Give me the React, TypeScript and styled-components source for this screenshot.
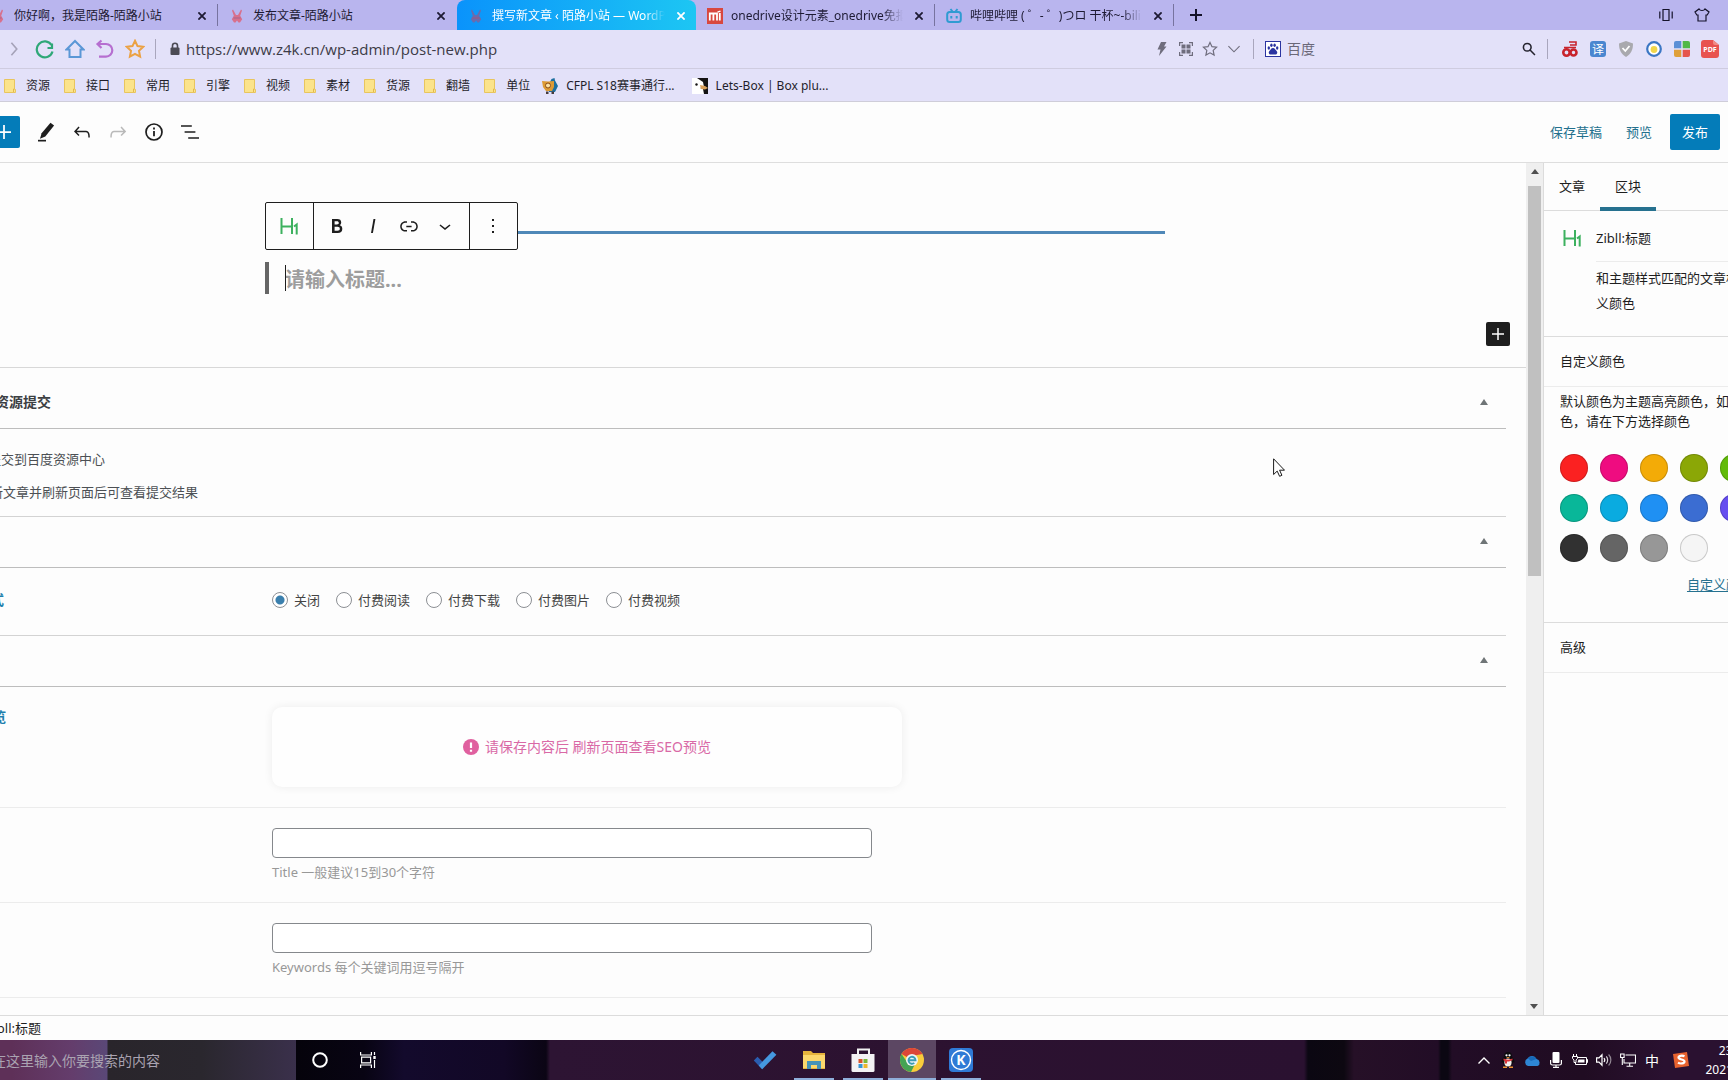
import React from "react";
import styled, { createGlobalStyle, css } from "styled-components";

const GlobalStyle = createGlobalStyle`
  *, *::before, *::after { box-sizing: border-box; }
  body {
    margin: 0;
    overflow: hidden;
    background: #fdfdfd;
    color: #1e1e1e;
    font-family: "Noto Sans", "Noto Sans CJK SC", sans-serif;
    font-size: 13px;
    line-height: 20px;
  }
  button, input { font: inherit; color: inherit; }
  button { margin: 0; padding: 0; border: 0; background: none; }
  h1, h2, h3, p { margin: 0; font-weight: 400; font-size: inherit; }
  svg { display: block; flex: none; }
`;

/* ---------- shell ---------- */

const Viewport = styled.div`
  height: 100vh;
  overflow: hidden;
`;

const Desktop = styled.div`
  display: flex;
  flex-direction: column;
  height: 100%;
  margin: 0 -96px;
`;

/* ---------- browser chrome ---------- */

const TabStrip = styled.div`
  display: flex;
  align-items: stretch;
  height: 30px;
  padding: 0 96px 0 75px;
  background: #b9b5ee;
  font-size: 12px;
  color: #1d1a33;
`;

const TabItem = styled.div<{ $active?: boolean; $divider?: boolean }>`
  display: flex;
  align-items: center;
  gap: 8px;
  width: 239px;
  padding: 2px 7px 0 11px;
  border-right: 1px solid transparent;
  border-image: ${(p) =>
    p.$divider ? "linear-gradient(transparent 16%, #77739f 16%, #77739f 84%, transparent 84%) 1" : "none"};
  ${(p) =>
    p.$active &&
    css`
      border: 0;
      border-radius: 8px 8px 0 0;
      background: linear-gradient(90deg, #0a93fb, #1dc6f3);
      color: #fff;
    `}
`;

const TabTitle = styled.span<{ $fade?: boolean }>`
  flex: 1;
  overflow: hidden;
  white-space: nowrap;
  ${(p) => p.$fade && "mask-image: linear-gradient(90deg, #000 88%, transparent);"}
`;

const GlyphButton = styled.button`
  display: flex;
  align-items: center;
  justify-content: center;
  width: 16px;
  height: 16px;
`;

const NewTab = styled(GlyphButton)`
  align-self: center;
  width: 44px;
`;

const WindowTools = styled.div`
  display: flex;
  align-items: center;
  gap: 20px;
  margin-left: auto;
  padding-right: 18px;
`;

const AddressBar = styled.div`
  display: flex;
  align-items: center;
  height: 39px;
  padding: 0 104px 0 101px;
  border-bottom: 1px solid #cfcce0;
  background: #e3e1f9;
`;

const NavButtons = styled.div`
  display: flex;
  gap: 10px;
  margin-right: 10px;
`;

const NavButton = styled.button`
  display: flex;
  align-items: center;
  justify-content: center;
  width: 20px;
  height: 20px;
`;

const Separator = styled.span`
  width: 1px;
  height: 20px;
  background: #a9a6bd;
`;

const UrlField = styled.label`
  display: flex;
  flex: 1;
  align-items: center;
  gap: 6px;
  padding-left: 14px;
`;

const UrlInput = styled.input`
  flex: 1;
  padding: 0;
  border: 0;
  outline: 0;
  background: none;
  color: #3c3b47;
  font-family: "Open Sans", "Noto Sans", sans-serif;
  font-size: 15px;
  line-height: 24px;
`;

const ToolGroup = styled.div`
  display: flex;
  align-items: center;
  gap: 8px;
  margin-right: 11px;
`;

const EngineField = styled.label`
  display: flex;
  align-items: center;
  gap: 6px;
  width: 293px;
  padding: 0 10px 0 11px;
  color: #6a6878;
  font-size: 14px;
`;

const EngineInput = styled.input`
  flex: 1;
  min-width: 0;
  padding: 0;
  border: 0;
  outline: 0;
  background: none;
`;

const Extensions = styled.div`
  display: flex;
  align-items: center;
  gap: 8px;
  padding-left: 12px;
`;

const Extension = styled.button`
  display: flex;
  align-items: center;
  justify-content: center;
  width: 20px;
  height: 20px;
`;

const BookmarkBar = styled.nav`
  display: flex;
  align-items: center;
  gap: 12px;
  height: 33px;
  padding: 1px 98px 0;
  border-bottom: 1px solid #cfcdd9;
  background: #e3e1f9;
  font-size: 12px;
`;

const Bookmark = styled.a<{ $wide?: boolean }>`
  display: flex;
  align-items: center;
  gap: 8px;
  margin-right: ${(p) => (p.$wide ? "5px" : "0")};
  color: #1f1e2b;
  text-decoration: none;
  white-space: nowrap;
`;

/* ---------- editor header ---------- */

const EditorHeader = styled.header`
  display: flex;
  align-items: center;
  height: 61px;
  padding: 0 8px 0 84px;
  border-bottom: 1px solid #dedede;
`;

const HeaderTools = styled.div`
  display: flex;
  align-items: center;
`;

const InserterButton = styled.button<{ $size: number; $tone: string }>`
  display: flex;
  align-items: center;
  justify-content: center;
  width: ${(p) => p.$size}px;
  height: ${(p) => p.$size}px;
  border-radius: 2px;
  background: ${(p) => p.$tone};
`;

const IconButton = styled.button<{ $muted?: boolean }>`
  display: flex;
  align-items: center;
  justify-content: center;
  width: 36px;
  height: 46px;
  color: ${(p) => (p.$muted ? "#b9b9b9" : "#1e1e1e")};
`;

const HeaderSpacer = styled.span`
  width: 8px;
`;

const HeaderActions = styled.div`
  display: flex;
  align-items: center;
  gap: 24px;
  margin-left: auto;
  padding-right: 96px;
`;

const TextButton = styled.button`
  color: #23708d;
`;

const PublishButton = styled.button`
  width: 50px;
  height: 36px;
  margin-left: -6px;
  border-radius: 2px;
  background: #047cb9;
  color: #fff;
`;

/* ---------- editor body ---------- */

const Workspace = styled.div`
  display: flex;
  flex: 1;
  min-height: 0;
`;

const Content = styled.main`
  flex: 1;
  min-width: 0;
  overflow: hidden;
`;

const Canvas = styled.section`
  display: flex;
  flex-direction: column;
  gap: 28px;
  padding-bottom: 21px;
`;

const Column = styled.div`
  display: flex;
  flex-direction: column;
  gap: 28px;
  width: 100%;
  max-width: 900px;
  margin: 0 auto;
`;

const TitleRule = styled.div`
  position: relative;
  height: 71px;
  border-bottom: 3px solid #4f88b8;
`;

const BlockToolbar = styled.div`
  position: absolute;
  top: 39px;
  left: 0;
  display: flex;
  height: 48px;
  border: 1px solid #1e1e1e;
  border-radius: 2px;
  background: #fdfdfd;
`;

const ToolbarGroup = styled.div`
  display: flex;
  align-items: center;
  padding: 0 6px 0 5px;
  & + & { border-left: 1px solid #1e1e1e; }
`;

const HeadingBlock = styled.h1`
  position: relative;
  height: 32px;
  padding: 2px 0 0 16px;
  border-left: 4px solid #666;
  color: #9d9d9d;
  font-size: 20px;
  font-weight: 700;
  line-height: 32px;
  &::before {
    content: "";
    position: absolute;
    top: 3px;
    left: 16px;
    width: 1px;
    height: 26px;
    background: #1e1e1e;
  }
`;

const InserterRow = styled.div`
  display: flex;
  justify-content: flex-end;
  padding-right: 16px;
`;

const MetaArea = styled.section`
  padding: 10px 20px 0 0;
  border-top: 1px solid #d8d8d8;
`;

const MetaBox = styled.section`
  border-bottom: 1px solid #d3d3d3;
`;

const MetaHeader = styled.header`
  display: flex;
  align-items: center;
  justify-content: space-between;
  height: 51px;
  padding: 0 18px 2px 35px;
  border-bottom: 1px solid #bdbdbd;
`;

const MetaTitle = styled.h2`
  color: #3c4043;
  font-size: 14px;
  font-weight: 600;
`;

const Toggle = styled.button`
  width: 8px;
  height: 6px;
  background: #6f7577;
  clip-path: polygon(50% 0, 100% 100%, 0 100%);
`;

const SubmitBody = styled.div`
  display: flex;
  flex-direction: column;
  gap: 11px;
  padding: 19px 34px 13px;
  color: #4c5054;
  line-height: 22px;
`;

const CheckLabel = styled.label`
  display: flex;
  align-items: center;
  gap: 8px;
`;

const CheckInput = styled.input`
  width: 16px;
  height: 16px;
  margin: 0;
`;

const FieldRow = styled.div`
  display: grid;
  grid-template-columns: 324px 1fr;
  padding: 20px 0 20px 44px;
  border-bottom: 1px solid #ececec;
`;

const PayRow = styled(FieldRow)`
  padding-top: 22px;
  padding-bottom: 25px;
  border-bottom: 0;
`;

const FieldTitle = styled.h3`
  color: #1f80ad;
  font-size: 14px;
  font-weight: 700;
`;

const RadioGroup = styled.div`
  display: flex;
  gap: 16px;
  color: #444;
`;

const RadioLabel = styled.label`
  display: flex;
  align-items: center;
  gap: 6px;
`;

const RadioInput = styled.input`
  appearance: none;
  width: 16px;
  height: 16px;
  margin: 0;
  border: 1px solid #8c8f94;
  border-radius: 50%;
  background: #fff;
  &:checked { background: radial-gradient(circle, #3a7fad 0 4px, #fff 5px); }
`;

const SeoNotice = styled.div`
  display: flex;
  align-items: center;
  justify-content: center;
  gap: 6px;
  width: 630px;
  height: 80px;
  border-radius: 10px;
  background: #fefefe;
  box-shadow: 0 0 10px rgba(0, 0, 0, 0.07);
  color: #d969a6;
  font-size: 14px;
`;

const TextField = styled.label`
  display: flex;
  flex-direction: column;
  gap: 4px;
  width: 600px;
  color: #989898;
`;

const TextInput = styled.input`
  height: 30px;
  padding: 0 8px;
  border: 1px solid #85888c;
  border-radius: 4px;
  background: #fff;
`;

const Scrollbar = styled.div`
  display: flex;
  flex-direction: column;
  align-items: center;
  justify-content: space-between;
  width: 17px;
  background: #efefef;
`;

const ScrollTrack = styled.div`
  flex: 1;
  width: 13px;
  padding-top: 6px;
`;

const ScrollThumb = styled.div`
  height: 48%;
  background: #c0c0c0;
`;

const ScrollArrow = styled.button<{ $down?: boolean }>`
  display: flex;
  align-items: center;
  justify-content: center;
  width: 17px;
  height: 17px;
  transform: ${(p) => (p.$down ? "rotate(180deg)" : "none")};
`;

/* ---------- settings sidebar ---------- */

const Sidebar = styled.aside`
  width: 281px;
  border-left: 1px solid #dcdcdc;
`;

const SideTabs = styled.div`
  display: flex;
  height: 48px;
  border-bottom: 1px solid #dcdcdc;
`;

const SideTab = styled.button<{ $active?: boolean }>`
  width: 56px;
  height: 48px;
  border-bottom: 4px solid ${(p) => (p.$active ? "#26718f" : "transparent")};
  padding-top: 2px;
`;

const BlockCard = styled.section`
  display: grid;
  grid-template-columns: 36px 1fr;
  padding: 15px 16px 20px;
  border-bottom: 1px solid #dcdcdc;
`;

const BlockIcon = styled.div`
  padding: 4px 0 0 3px;
`;

const BlockName = styled.h2`
  padding-bottom: 11px;
  border-bottom: 1px solid #ececec;
  line-height: 24px;
`;

const BlockNote = styled.p`
  padding-top: 4px;
  line-height: 25px;
`;

const PanelTitle = styled.h2`
  padding: 14px 16px 15px;
  border-bottom: 1px solid #ececec;
`;

const ColorPanel = styled.section`
  padding: 4px 16px 28px;
  border-bottom: 1px solid #dcdcdc;
`;

const Swatches = styled.div`
  display: grid;
  grid-template-columns: repeat(6, 28px);
  gap: 12px;
  padding: 23px 0 12px;
`;

const Swatch = styled.button<{ $color: string }>`
  width: 28px;
  height: 28px;
  border-radius: 50%;
  background: ${(p) => p.$color};
  box-shadow: inset 0 0 0 1px rgba(0, 0, 0, 0.18);
`;

const CustomRow = styled.div`
  display: flex;
  gap: 16px;
  justify-content: flex-end;
  padding-right: 14px;
`;

const CustomLink = styled.button`
  color: #26718f;
  text-decoration: underline;
  text-underline-offset: 2px;
`;

/* ---------- footer and taskbar ---------- */

const Breadcrumb = styled.footer`
  display: flex;
  align-items: center;
  gap: 8px;
  height: 25px;
  padding-left: 27px;
  border-top: 1px solid #dcdcdc;
`;

const Taskbar = styled.div`
  display: flex;
  height: 40px;
  padding-left: 48px;
  background: linear-gradient(
    90deg,
    #0b0713 0 344px,
    #05030b 392px,
    #080413 460px,
    #130a2c 500px,
    #120826 600px,
    #0b0514 642px,
    #2d1433 646px,
    #2c1230 1000px,
    #2a1130 1400px,
    #0b0712 1404px,
    #0d0811 1440px,
    #261027 1450px,
    #220d26 1534px,
    #0b0712 1537px,
    #0b0712 1544px,
    #220d26 1548px,
    #200c22 1680px,
    #2a1130 1760px
  );
  color: #fff;
  font-size: 12px;
  line-height: 19px;
`;

const SearchBox = styled.label`
  display: flex;
  align-items: center;
  gap: 12px;
  width: 344px;
  padding-left: 12px;
  background: linear-gradient(90deg, #5e3058 0 60px, #643d6c 120px, #5a4877 155px, #29252b 156px, #2a272e 250px, #3a304b 344px);
`;

const SearchInput = styled.input`
  flex: 1;
  min-width: 0;
  padding: 0;
  border: 0;
  outline: 0;
  background: none;
  font-size: 14px;
  &::placeholder { color: #aaa3b1; opacity: 1; }
`;

const TaskButton = styled.button<{ $open?: boolean; $active?: boolean }>`
  display: flex;
  align-items: center;
  justify-content: center;
  width: 48px;
  height: 40px;
  background: ${(p) => (p.$active ? "#5c4763" : "none")};
  background-image: ${(p) => (p.$open || p.$active ? "linear-gradient(#8fafda, #8fafda)" : "none")};
  background-repeat: no-repeat;
  background-position: center bottom;
  background-size: ${(p) => (p.$active ? "48px 2px" : "40px 2px")};
`;

const PinnedApps = styled.div`
  display: flex;
  gap: 1px;
  margin-left: 349px;
`;

const Tray = styled.div`
  display: flex;
  align-items: center;
  gap: 5px;
  margin-left: auto;
  padding-right: 54px;
`;

const TrayIcons = styled.div`
  display: flex;
`;

const TrayIcon = styled.button`
  display: flex;
  align-items: center;
  justify-content: center;
  width: 24px;
  height: 40px;
  font-size: 14px;
`;

const Clock = styled.time`
  width: 72px;
  text-align: center;
`;

/* ---------- drawings ---------- */

const WpIcon = ({ d, size = 24 }: { d: string; size?: number }) => (
  <svg width={size} height={size} viewBox="0 0 24 24" fill="currentColor" aria-hidden="true">
    <path d={d} />
  </svg>
);

const paths = {
  undo: "M18.3 11.7c-.6-.6-1.4-.9-2.3-.9H6.7l2.9-3.3-1.1-1-4.5 5L8.5 16l1-1-2.7-2.7H16c.5 0 .9.2 1.3.5 1 1 1 3.4 1 4.5v.3h1.5v-.2c0-1.5 0-4.3-1.5-5.7z",
  redo: "M15.6 6.5l-1.1 1 2.9 3.3H8c-.9 0-1.7.3-2.3.9-1.4 1.5-1.4 4.2-1.4 5.6v.2h1.5v-.3c0-1.1 0-3.5 1-4.5.3-.3.7-.5 1.3-.5h9.2L14.5 15l1.1 1.1 4.6-4.6-4.6-5z",
  list: "M13.8 5.2H3v1.5h10.8V5.2zm-3.6 12v1.5H21v-1.5H10.2zm7.2-6H6.6v1.5h10.8v-1.5z",
  bold: "M14.7 11.3c1-.6 1.5-1.6 1.5-3 0-2.3-1.3-3.4-4-3.4H7v14h5.8c1.4 0 2.5-.3 3.3-1 .8-.7 1.2-1.7 1.2-2.9.1-1.9-.8-3.1-2.6-3.7zm-5.1-4h2.3c.6 0 1.1.1 1.4.4.3.3.5.7.5 1.2s-.2 1-.5 1.2c-.3.3-.8.4-1.4.4H9.6V7.3zm4.6 9c-.4.3-1 .4-1.7.4H9.6v-3.9h2.9c.7 0 1.3.2 1.7.5.4.3.6.8.6 1.5s-.2 1.2-.6 1.5z",
  italic: "M12.5 5L10 19h1.9l2.5-14z",
  link: "M15.6 7.2H14v1.5h1.6c2 0 3.7 1.7 3.7 3.7s-1.7 3.7-3.7 3.7H14v1.5h1.6c2.8 0 5.2-2.3 5.2-5.2 0-2.9-2.3-5.2-5.2-5.2zM4.7 12.4c0-2 1.7-3.7 3.7-3.7H10V7.2H8.4c-2.9 0-5.2 2.3-5.2 5.2 0 2.9 2.3 5.2 5.2 5.2H10v-1.5H8.4c-2 0-3.7-1.7-3.7-3.7zm4.6.9h5.3v-1.5H9.3v1.5z",
  chevron: "M17.5 11.6L12 16l-5.5-4.4.9-1.2L12 14l4.5-3.6 1 1.2z",
  more: "M13 19h-2v-2h2v2zm0-6h-2v-2h2v2zm0-6h-2V5h2v2z",
};

const PenIcon = () => (
  <svg width="24" height="24" viewBox="0 0 24 24" fill="#1e1e1e" aria-hidden="true">
    <path d="M16.500 2.800l3.600 2.600-8.800 11-5.300 2.400 1.600-5.600z" />
    <path d="M4 19.800h8v1.700H4z" />
  </svg>
);

const InfoIcon = () => (
  <svg width="24" height="24" viewBox="0 0 24 24" fill="none" stroke="#1e1e1e" aria-hidden="true">
    <circle cx="12" cy="12" r="8" strokeWidth="1.7" />
    <path d="M12 11v5.2M12 7.6v1.9" strokeWidth="1.8" />
  </svg>
);

const PlusIcon = ({ size, color, width = 1.5 }: { size: number; color: string; width?: number }) => (
  <svg width={size} height={size} viewBox="0 0 12 12" stroke={color} strokeWidth={width} aria-hidden="true">
    <path d="M6 0v12M0 6h12" />
  </svg>
);

const HeadingIcon = () => (
  <svg width="19" height="17" viewBox="0 0 19 17" fill="none" stroke="#3db15f" strokeWidth="2" aria-hidden="true">
    <path d="M1.5 0v16M12 0v16M1.5 8.5H12M14 8.5l2.7-2V16.5" />
  </svg>
);

const CloseGlyph = ({ color = "#1d1a33" }: { color?: string }) => (
  <svg width="8" height="8" viewBox="0 0 8 8" stroke={color} strokeWidth="1.8" aria-hidden="true">
    <path d="M0.4 0.4l7.2 7.2M7.6 0.4L0.4 7.6" />
  </svg>
);

const RabbitIcon = ({ dim }: { dim?: boolean }) => (
  <svg width="16" height="16" viewBox="0 0 16 16" aria-hidden="true">
    <path d="M4 1.5l3 5.5h2l3-5.5 1 1-1.8 5.3 2 3.5-2.2 3.2H9.5L8 12.6l-1.500 1.900H5l-2.200-3.200 2-3.500L3 2.500z" fill={dim ? "#6a6bae" : "#d8708c"} />
    <path d="M4.500 10h7" stroke={dim ? "#a0577f" : "#a3648f"} strokeWidth="1" />
  </svg>
);

const RedIcon = () => (
  <svg width="16" height="16" viewBox="0 0 16 16" aria-hidden="true">
    <rect width="16" height="16" fill="#d8473f" />
    <path d="M2.800 12.500V5.500h7.200v7M6.400 5.500v7M12.800 5v7.500" stroke="#fff" strokeWidth="1.800" fill="none" />
    <path d="M10.500 4.200l3-1" stroke="#fff" strokeWidth="1.400" />
  </svg>
);

const BiliIcon = () => (
  <svg width="16" height="16" viewBox="0 0 16 16" fill="none" stroke="#2f9bd2" strokeWidth="2" aria-hidden="true">
    <rect x="1.200" y="4" width="13.600" height="10" rx="2.500" />
    <path d="M4.500 1l2 2.500M11.500 1l-2 2.500M5.300 8v2.500M10.700 8v2.500" />
  </svg>
);

const FolderIcon = () => (
  <svg width="16" height="16" viewBox="0 0 16 16" aria-hidden="true">
    <path d="M2.500 1.500h10v9l1 1v3h-11z" fill="#fbe38b" stroke="#e8c55e" />
    <path d="M11.500 14v-3h1.500" stroke="#e3b94d" fill="none" />
  </svg>
);

const CfplIcon = () => (
  <svg width="16" height="16" viewBox="0 0 16 16" aria-hidden="true">
    <path d="M9.500 1l3-1 .5 2.500L16 8l-3 6H7V6z" fill="#1e6f9f" />
    <path d="M0 3l6 .5 6-.5v6l-2 4H4L1 9z" fill="#dd9a35" />
    <circle cx="6" cy="7.500" r="2.500" fill="#fbe1a5" stroke="#8a4b16" />
    <path d="M4 13.500h2.500V16H4zM9.500 13.500H12V16H9.500z" fill="#473a3c" />
  </svg>
);

const EagleIcon = () => (
  <svg width="16" height="16" viewBox="0 0 16 16" aria-hidden="true">
    <rect width="16" height="16" fill="#fff" />
    <path d="M5 0h11v16h-4l-1-5-3-1 4-1-1-5z" fill="#151313" />
    <path d="M8 7l5 1 3 2-3 1.500-4-.5z" fill="#d9a05a" />
    <circle cx="4.500" cy="6.500" r="1.200" fill="#151313" />
  </svg>
);

const Stroke = ({ d, color, size = 20, width = 2 }: { d: string; color: string; size?: number; width?: number }) => (
  <svg width={size} height={size} viewBox="0 0 20 20" fill="none" stroke={color} strokeWidth={width} aria-hidden="true">
    <path d={d} />
  </svg>
);

const LockIcon = () => (
  <svg width="10" height="14" viewBox="0 0 10 14" aria-hidden="true">
    <rect x="0.500" y="5.500" width="9" height="7.500" rx="1" fill="#4c4b55" />
    <path d="M2.500 6V3.800a2.500 2.500 0 015 0V6" fill="none" stroke="#4c4b55" strokeWidth="1.600" />
  </svg>
);

const PawIcon = () => (
  <svg width="16" height="16" viewBox="0 0 16 16" fill="#2b34a0" aria-hidden="true">
    <rect x="0.500" y="0.500" width="15" height="15" fill="#fff" stroke="#2b34a0" />
    <ellipse cx="3.800" cy="7" rx="1.200" ry="1.700" />
    <ellipse cx="6.400" cy="4.300" rx="1.200" ry="1.700" />
    <ellipse cx="9.600" cy="4.300" rx="1.200" ry="1.700" />
    <ellipse cx="12.200" cy="7" rx="1.200" ry="1.700" />
    <path d="M8 7c2 0 2.300 2 3.600 3 1.300 1.200.600 3.600-1.400 3.600H5.800c-2 0-2.700-2.400-1.400-3.600C5.700 9 6 7 8 7z" />
  </svg>
);

const TranslateIcon = () => (
  <svg width="16" height="16" viewBox="0 0 16 16" aria-hidden="true">
    <rect width="16" height="16" rx="3" fill="#4a86d0" />
    <text x="8" y="12.500" textAnchor="middle" fontSize="12" fill="#fff">译</text>
  </svg>
);

const PdfIcon = () => (
  <svg width="18" height="18" viewBox="0 0 18 18" aria-hidden="true">
    <path d="M3 0h9l6 5v10a3 3 0 01-3 3H3a3 3 0 01-3-3V3a3 3 0 013-3z" fill="#e85350" />
    <path d="M12 0l6 5h-4a2 2 0 01-2-2z" fill="#f08c86" />
    <text x="9" y="12" textAnchor="middle" fontSize="7" fontWeight="700" fill="#fff">PDF</text>
  </svg>
);

/* ---------- data ---------- */

const folders = ["资源", "接口", "常用", "引擎", "视频", "素材", "货源", "翻墙", "单位"];
const payModes = ["关闭", "付费阅读", "付费下载", "付费图片", "付费视频"];
const swatches = [
  "#fb2121", "#ef0c80", "#f3ab07", "#8ba706", "#62bb0a", "#2fae3c",
  "#09b799", "#0aabe0", "#1f90f3", "#3b6dd2", "#664ef0", "#a04ee8",
  "#313131", "#656565", "#979797", "#f5f5f5",
];

const Tab = ({ icon, title, fade, active, divider }: {
  icon: React.ReactNode; title: string; fade?: boolean; active?: boolean; divider?: boolean;
}) => (
  <TabItem $active={active} $divider={divider}>
    {icon}
    <TabTitle $fade={fade}>{title}</TabTitle>
    <GlyphButton aria-label="关闭标签页">
      <CloseGlyph color={active ? "#fff" : undefined} />
    </GlyphButton>
  </TabItem>
);

const BrowserChrome = () => (
  <>
    <TabStrip>
      <Tab icon={<RabbitIcon />} title="你好啊，我是陌路-陌路小站" divider />
      <Tab icon={<RabbitIcon />} title="发布文章-陌路小站" />
      <Tab icon={<RabbitIcon dim />} title="撰写新文章 ‹ 陌路小站 — WordPress" fade active />
      <Tab icon={<RedIcon />} title="onedrive设计元素_onedrive免抠元素" fade divider />
      <Tab icon={<BiliIcon />} title="哔哩哔哩 ( ゜- ゜)つロ 干杯~-bilibili" fade divider />
      <NewTab aria-label="新标签页"><PlusIcon size={12} color="#14122a" width={2} /></NewTab>
      <WindowTools>
        <GlyphButton aria-label="手机模式">
          <svg width="14" height="12" viewBox="0 0 14 12" fill="none" stroke="#14122a" aria-hidden="true">
            <path d="M4 .5h6v11H4zM.8 2.500v7M13.200 2.500v7" strokeWidth="1.200" />
          </svg>
        </GlyphButton>
        <GlyphButton aria-label="皮肤">
          <svg width="16" height="14" viewBox="0 0 16 14" fill="none" stroke="#14122a" strokeWidth="1.200" aria-hidden="true">
            <path d="M5 1c1 2 5 2 6 0l4 3-1.800 3H12v6H4V7H2.800L1 4z" />
          </svg>
        </GlyphButton>
      </WindowTools>
    </TabStrip>
    <AddressBar>
      <NavButtons>
        <NavButton aria-label="前进"><Stroke d="M6 3l6 7-6 7" color="#a5a2b8" width={1.800} size={18} /></NavButton>
        <NavButton aria-label="刷新"><Stroke d="M17 4.500v4.500h-4.500M17.500 12.500A8 8 0 1116.500 6" color="#2fa878" width={2.200} /></NavButton>
        <NavButton aria-label="主页"><Stroke d="M1.500 10.500L10 2l8.500 8.500H15.500V18h-11v-7.500z" color="#5b97d6" /></NavButton>
        <NavButton aria-label="恢复"><Stroke d="M6.500 1.500L2.500 5l4 4M3 5h8a6.300 6.300 0 010 12.600H4" color="#b66fd0" width={2.200} /></NavButton>
        <NavButton aria-label="收藏夹"><Stroke d="M10 1.800l2.500 5.300 5.700.7-4.200 4 1.100 5.800L10 14.800l-5.100 2.800L6 11.800l-4.200-4 5.700-.7z" color="#eba144" /></NavButton>
      </NavButtons>
      <Separator />
      <UrlField>
        <LockIcon />
        <UrlInput aria-label="地址" defaultValue="https://www.z4k.cn/wp-admin/post-new.php" />
      </UrlField>
      <ToolGroup>
        <GlyphButton aria-label="加速">
          <svg width="10" height="14" viewBox="0 0 10 14" aria-hidden="true"><path d="M4 0h5.500L7 4.500h2.500L2 14l1.500-6.500H.5z" fill="#6f6d7d" /></svg>
        </GlyphButton>
        <GlyphButton aria-label="二维码">
          <svg width="14" height="14" viewBox="0 0 14 14" fill="none" stroke="#6f6d7d" aria-hidden="true">
            <path d="M.6 4V.6H4M10 .6h3.400V4M13.400 10v3.400H10M4 13.400H.6V10" strokeWidth="1.200" />
            <path d="M2.500 2.500h4v4h-4zM7.500 2.500h4v4h-4zM2.500 7.500h4v4h-4zM7.500 7.500h4v4h-4z" fill="#6f6d7d" stroke="none" />
          </svg>
        </GlyphButton>
        <GlyphButton aria-label="收藏"><Stroke size={16} width={1.500} color="#6f6d7d" d="M10 1.800l2.500 5.300 5.700.7-4.200 4 1.100 5.800L10 14.800l-5.100 2.800L6 11.800l-4.200-4 5.700-.7z" /></GlyphButton>
        <GlyphButton aria-label="更多"><Stroke size={14} width={1.600} color="#6f6d7d" d="M2 6l8 8 8-8" /></GlyphButton>
      </ToolGroup>
      <Separator />
      <EngineField>
        <PawIcon />
        <EngineInput aria-label="搜索" defaultValue="百度" />
        <GlyphButton aria-label="开始搜索">
          <Stroke size={14} color="#24232e" width={2.200} d="M13 7.500a5.500 5.500 0 11-11 0 5.500 5.500 0 0111 0zM11.500 11.500l7 7" />
        </GlyphButton>
      </EngineField>
      <Separator />
      <Extensions>
        <Extension aria-label="微博">
          <svg width="16" height="17" viewBox="0 0 16 17" fill="none" stroke="#c8232c" aria-hidden="true">
            <circle cx="4.500" cy="11.500" r="3.200" strokeWidth="2.600" />
            <circle cx="11.500" cy="11.500" r="3" strokeWidth="2.600" />
            <path d="M2 6.500h12M8 4h6V1H7" strokeWidth="1.600" />
          </svg>
        </Extension>
        <Extension aria-label="翻译"><TranslateIcon /></Extension>
        <Extension aria-label="防护">
          <svg width="16" height="16" viewBox="0 0 16 16" aria-hidden="true">
            <path d="M8 0l7 2.500C15 9 13 13 8 16 3 13 1 9 1 2.500z" fill="#a9a9ae" />
            <path d="M4.500 7l2.800 3 4.200-5" fill="none" stroke="#fff" strokeWidth="1.800" />
          </svg>
        </Extension>
        <Extension aria-label="浏览助手">
          <svg width="16" height="16" viewBox="0 0 16 16" aria-hidden="true">
            <circle cx="8" cy="8" r="6.800" fill="#fff" stroke="#3b76c4" strokeWidth="2.200" />
            <circle cx="8" cy="8.500" r="3.400" fill="#f2d64b" />
          </svg>
        </Extension>
        <Extension aria-label="扩展管理">
          <svg width="16" height="16" viewBox="0 0 16 16" aria-hidden="true">
            <path d="M2 0h5.300v7.300H0V2a2 2 0 012-2z" fill="#5c8fd6" />
            <path d="M8.700 0H14a2 2 0 012 2v5.300H8.700z" fill="#50b848" />
            <path d="M0 8.700h7.300V16H2a2 2 0 01-2-2z" fill="#dfa03a" />
            <path d="M8.700 8.700H16V14a2 2 0 01-2 2H8.700z" fill="#e5554d" />
          </svg>
        </Extension>
        <Extension aria-label="文档工具"><PdfIcon /></Extension>
      </Extensions>
    </AddressBar>
    <BookmarkBar>
      {folders.map((name) => (
        <Bookmark href="#" key={name}><FolderIcon />{name}</Bookmark>
      ))}
      <Bookmark href="#" $wide><CfplIcon />CFPL S18赛事通行...</Bookmark>
      <Bookmark href="#"><EagleIcon />Lets-Box | Box plu...</Bookmark>
    </BookmarkBar>
  </>
);

const Header = () => (
  <EditorHeader>
    <HeaderTools>
      <InserterButton $size={32} $tone="#047cb9" aria-label="添加区块"><PlusIcon size={14} color="#fff" /></InserterButton>
      <HeaderSpacer />
      <IconButton aria-label="工具"><PenIcon /></IconButton>
      <IconButton aria-label="撤销"><WpIcon d={paths.undo} /></IconButton>
      <IconButton aria-label="重做" $muted><WpIcon d={paths.redo} /></IconButton>
      <IconButton aria-label="详情"><InfoIcon /></IconButton>
      <IconButton aria-label="大纲"><WpIcon d={paths.list} /></IconButton>
    </HeaderTools>
    <HeaderActions>
      <TextButton>保存草稿</TextButton>
      <TextButton>预览</TextButton>
      <PublishButton>发布</PublishButton>
    </HeaderActions>
  </EditorHeader>
);

const Editor = () => (
  <Content>
    <Canvas>
      <Column>
        <TitleRule>
          <BlockToolbar>
            <ToolbarGroup>
              <IconButton aria-label="标题"><HeadingIcon /></IconButton>
            </ToolbarGroup>
            <ToolbarGroup>
              <IconButton aria-label="粗体"><WpIcon d={paths.bold} /></IconButton>
              <IconButton aria-label="斜体"><WpIcon d={paths.italic} /></IconButton>
              <IconButton aria-label="链接"><WpIcon d={paths.link} /></IconButton>
              <IconButton aria-label="更多格式"><WpIcon d={paths.chevron} /></IconButton>
            </ToolbarGroup>
            <ToolbarGroup>
              <IconButton aria-label="选项"><WpIcon d={paths.more} /></IconButton>
            </ToolbarGroup>
          </BlockToolbar>
        </TitleRule>
        <HeadingBlock>请输入标题...</HeadingBlock>
      </Column>
      <InserterRow>
        <InserterButton $size={24} $tone="#1e1e1e" aria-label="插入区块"><PlusIcon size={12} color="#fff" /></InserterButton>
      </InserterRow>
    </Canvas>
    <MetaArea>
      <MetaBox>
        <MetaHeader>
          <MetaTitle>百度站长资源提交</MetaTitle>
          <Toggle aria-label="折叠" />
        </MetaHeader>
        <SubmitBody>
          <CheckLabel><CheckInput type="checkbox" />自动提交到百度资源中心</CheckLabel>
          <p>发布或更新文章并刷新页面后可查看提交结果</p>
        </SubmitBody>
      </MetaBox>
      <MetaBox>
        <MetaHeader>
          <span />
          <Toggle aria-label="折叠" />
        </MetaHeader>
        <PayRow>
          <FieldTitle>付费模式</FieldTitle>
          <RadioGroup>
            {payModes.map((mode, i) => (
              <RadioLabel key={mode}>
                <RadioInput type="radio" name="pay" defaultChecked={i === 0} />
                {mode}
              </RadioLabel>
            ))}
          </RadioGroup>
        </PayRow>
      </MetaBox>
      <section>
        <MetaHeader>
          <span />
          <Toggle aria-label="折叠" />
        </MetaHeader>
        <FieldRow>
          <FieldTitle>SEO 预览</FieldTitle>
          <SeoNotice>
            <svg width="16" height="16" viewBox="0 0 16 16" aria-hidden="true">
              <circle cx="8" cy="8" r="8" fill="#e0609f" />
              <path d="M8 3.500v5.500M8 10.800v2" stroke="#fff" strokeWidth="2.200" />
            </svg>
            请保存内容后 刷新页面查看SEO预览
          </SeoNotice>
        </FieldRow>
        <FieldRow>
          <span />
          <TextField><TextInput type="text" />Title 一般建议15到30个字符</TextField>
        </FieldRow>
        <FieldRow>
          <span />
          <TextField><TextInput type="text" />Keywords 每个关键词用逗号隔开</TextField>
        </FieldRow>
      </section>
    </MetaArea>
  </Content>
);

const ArrowGlyph = () => (
  <svg width="8" height="5" viewBox="0 0 8 5" aria-hidden="true"><path d="M0 5l4-5 4 5z" fill="#4f4f4f" /></svg>
);

const Settings = () => (
  <Sidebar>
    <SideTabs>
      <SideTab>文章</SideTab>
      <SideTab $active>区块</SideTab>
    </SideTabs>
    <BlockCard>
      <BlockIcon><HeadingIcon /></BlockIcon>
      <div>
        <BlockName>Zibll:标题</BlockName>
        <BlockNote>和主题样式匹配的文章标题，可自定义颜色</BlockNote>
      </div>
    </BlockCard>
    <PanelTitle>自定义颜色</PanelTitle>
    <ColorPanel>
      <p>默认颜色为主题高亮颜色，如需要自定义颜色，请在下方选择颜色</p>
      <Swatches>
        {swatches.map((color) => (
          <Swatch key={color} $color={color} aria-label={color} />
        ))}
      </Swatches>
      <CustomRow>
        <CustomLink>自定义颜色</CustomLink>
        <button>清除</button>
      </CustomRow>
    </ColorPanel>
    <PanelTitle>高级</PanelTitle>
  </Sidebar>
);

const Pointer = styled.svg`
  position: absolute;
  top: 458px;
  left: 1273px;
`;

const SystemBar = () => (
  <Taskbar>
    <SearchBox>
      <svg width="16" height="16" viewBox="0 0 20 20" fill="none" stroke="#ddd" strokeWidth="2" aria-hidden="true">
        <path d="M13 7.500a5.500 5.500 0 11-11 0 5.500 5.500 0 0111 0zM11.500 11.500l7 7" />
      </svg>
      <SearchInput aria-label="搜索" placeholder="在这里输入你要搜索的内容" />
    </SearchBox>
    <TaskButton aria-label="语音助手">
      <svg width="16" height="16" viewBox="0 0 16 16" aria-hidden="true"><circle cx="8" cy="8" r="6.800" fill="none" stroke="#fff" strokeWidth="2" /></svg>
    </TaskButton>
    <TaskButton aria-label="任务视图">
      <svg width="16" height="16" viewBox="0 0 16 16" fill="none" stroke="#fff" strokeWidth="1.200" aria-hidden="true">
        <path d="M.6 0v3h10.800V0M.6 16v-3h10.800v3M1.600 5.200h9v5.600h-9zM14.500 0v3M14.500 8v8" />
        <path d="M13.300 4h2.400v3h-2.400z" fill="#fff" stroke="none" />
      </svg>
    </TaskButton>
    <PinnedApps>
      <TaskButton aria-label="待办">
        <svg width="24" height="20" viewBox="0 0 24 20" aria-hidden="true">
          <path d="M.8 10.500l3.700-3.700 7.500 7.500-2.800 4.900z" fill="#2a5db0" />
          <path d="M9.200 19.200l-3.500-3.700L19.500 1.200l3.900 3.600z" fill="#4598e0" />
        </svg>
      </TaskButton>
      <TaskButton aria-label="文件资源管理器" $open>
        <svg width="24" height="20" viewBox="0 0 24 20" aria-hidden="true">
          <path d="M1 1h8l2 2h12v16H1z" fill="#e6b43c" />
          <path d="M1 5h22v13H1z" fill="#fbd86c" />
          <path d="M5 19v-8h14v8h-4v-4H9v4z" fill="#4694b8" />
        </svg>
      </TaskButton>
      <TaskButton aria-label="应用商店" $open>
        <svg width="24" height="24" viewBox="0 0 24 24" aria-hidden="true">
          <path d="M7 7V1.500h11V7" fill="none" stroke="#f1f1f1" strokeWidth="2" />
          <path d="M.5 6h23v16.500a1.500 1.500 0 01-1.500 1.500H2a1.500 1.500 0 01-1.500-1.500z" fill="#f4f2f4" />
          <path d="M7.500 11h4v4h-4z" fill="#d9532c" />
          <path d="M12.500 11h4v4h-4z" fill="#7db83a" />
          <path d="M7.500 16h4v4h-4z" fill="#3795d4" />
          <path d="M12.500 16h4v4h-4z" fill="#efb52c" />
        </svg>
      </TaskButton>
      <TaskButton aria-label="浏览器" $active>
        <svg width="24" height="24" viewBox="0 0 24 24" aria-hidden="true">
          <circle cx="12" cy="12" r="12" fill="#f8cd3c" />
          <path d="M12 12L1.600 6A12 12 0 0122.400 6H12z" fill="#dd4638" />
          <path d="M12 12l4.500 1L11 24A12 12 0 011.600 6L7 14z" fill="#44a354" />
          <path d="M12 6h10.400L12 8z" fill="#dd4638" />
          <circle cx="12" cy="12" r="6" fill="#eef4f8" />
          <path d="M8.500 12.200h7a3.500 3.500 0 10-1.200 2.700" fill="none" stroke="#3a9cb4" strokeWidth="1.900" />
        </svg>
      </TaskButton>
      <TaskButton aria-label="音乐" $open>
        <svg width="24" height="24" viewBox="0 0 24 24" aria-hidden="true">
          <rect width="24" height="24" rx="4" fill="#2f7ad6" />
          <circle cx="12" cy="12" r="9.500" fill="none" stroke="#fff" strokeWidth="1.400" />
          <text x="12" y="17" textAnchor="middle" fontSize="14" fontWeight="700" fill="#fff">K</text>
        </svg>
      </TaskButton>
    </PinnedApps>
    <Tray>
      <TrayIcons>
        <TrayIcon aria-label="显示隐藏图标">
          <svg width="12" height="7" viewBox="0 0 12 7" fill="none" stroke="#fff" strokeWidth="1.400" aria-hidden="true"><path d="M.5 6.500L6 1l5.500 5.500" /></svg>
        </TrayIcon>
        <TrayIcon aria-label="企鹅">
          <svg width="14" height="16" viewBox="0 0 14 16" aria-hidden="true">
            <path d="M7 0c3 0 4 2 4 4.500 1 2 3 4 2.500 6-1 .5-1.500-.5-1.500-.5 0 2-2 5-5 5s-5-3-5-5c0 0-.5 1-1.500.5C0 8.500 2 6.500 3 4.500 3 2 4 0 7 0z" fill="#0c0c0e" />
            <ellipse cx="7" cy="10.500" rx="3.600" ry="4" fill="#f5f1ee" />
            <circle cx="5.500" cy="3.300" r="1.100" fill="#fff" /><circle cx="8.500" cy="3.300" r="1.100" fill="#fff" />
            <path d="M2.500 6.500c3 1.500 6 1.500 9 0v1.800c-3 1.300-4 1.300-5.500 1.200v2H4v-2.300L2.500 8.300z" fill="#d8343a" />
            <path d="M2 14.500h4v1.500H2zM8 14.500h4v1.500H8zM5 5h4L7 6.300z" fill="#ec9330" />
          </svg>
        </TrayIcon>
        <TrayIcon aria-label="云盘">
          <svg width="17" height="11" viewBox="0 0 17 11" aria-hidden="true">
            <path d="M4 11a4 4 0 01-.5-7.500A5 5 0 0112.500 4 3.700 3.700 0 0113.500 11z" fill="#2e86d4" />
            <path d="M4 3.500A5 5 0 0112.500 4L7 6z" fill="#1669b8" />
          </svg>
        </TrayIcon>
        <TrayIcon aria-label="麦克风">
          <svg width="12" height="16" viewBox="0 0 12 16" aria-hidden="true">
            <rect x="2.500" y="0" width="7" height="11" rx="1" fill="#fff" />
            <path d="M.6 8v3.500c0 1 .9 1.500 2 1.500h6.800c1.100 0 2-.5 2-1.500V8M6 13v2.500M3 15.400h6" fill="none" stroke="#fff" strokeWidth="1.200" />
          </svg>
        </TrayIcon>
        <TrayIcon aria-label="电池">
          <svg width="16" height="12" viewBox="0 0 16 12" fill="none" stroke="#fff" aria-hidden="true">
            <path d="M5.500 3.500h9v7h-11V8M14.500 5.500h1v3h-1M1.500 0v2M4.500 0v2M.5 2.500h5v1.800L4 6v2.500H2V6L.5 4.300z" />
            <path d="M6.500 5.500h6v3h-7z" fill="#fff" stroke="none" />
          </svg>
        </TrayIcon>
        <TrayIcon aria-label="音量">
          <svg width="16" height="14" viewBox="0 0 16 14" fill="none" stroke="#fff" strokeWidth="1.200" aria-hidden="true">
            <path d="M.6 4.800h2.400L6 1.800v10.400L3 9.200H.6zM8 5c.8 1 .8 3 0 4" />
            <path d="M10.300 3.300c1.800 2 1.800 5.400 0 7.400" opacity=".8" />
            <path d="M12.600 1.500c3 3 3 8 0 11" opacity=".5" />
          </svg>
        </TrayIcon>
        <TrayIcon aria-label="网络">
          <svg width="16" height="14" viewBox="0 0 16 14" fill="none" stroke="#fff" strokeWidth="1.100" aria-hidden="true">
            <path d="M5.500 2h10v8H4V6M9.700 10v3M6.500 13.300h6.500M.6 1h3.500v3.500H.6zM2.300 4.500V12" />
          </svg>
        </TrayIcon>
        <TrayIcon aria-label="输入法">中</TrayIcon>
      </TrayIcons>
      <TrayIcon aria-label="输入法菜单">
        <svg width="16" height="16" viewBox="0 0 16 16" aria-hidden="true">
          <path d="M0 2l14-2 2 14L2 16z" fill="#e8632f" />
          <path d="M11.500 4.300c-2-1-6-.8-6 1.300 0 2.400 6 1.400 6 3.900 0 2.200-4.500 2.500-6.500 1.200" fill="none" stroke="#fff" strokeWidth="2.200" />
        </svg>
      </TrayIcon>
      <Clock>23:41<br />2021/3/14</Clock>
    </Tray>
  </Taskbar>
);

export default function App() {
  return (
    <Viewport>
      <GlobalStyle />
      <Desktop>
        <BrowserChrome />
        <Header />
        <Workspace>
          <Editor />
          <Scrollbar>
            <ScrollArrow aria-label="向上滚动"><ArrowGlyph /></ScrollArrow>
            <ScrollTrack><ScrollThumb /></ScrollTrack>
            <ScrollArrow aria-label="向下滚动" $down><ArrowGlyph /></ScrollArrow>
          </Scrollbar>
          <Settings />
        </Workspace>
        <Breadcrumb>
          <span>文档</span>
          <span>→</span>
          <span>Zibll:标题</span>
        </Breadcrumb>
        <SystemBar />
      </Desktop>
      <Pointer width="12" height="19" viewBox="0 0 12 19" fill="#fff" stroke="#1a1a1a" aria-hidden="true">
        <path d="M.6.8v15.700l3.600-3.400 2.400 5.200 2.300-1-2.300-5.100h4.900z" />
      </Pointer>
    </Viewport>
  );
}
